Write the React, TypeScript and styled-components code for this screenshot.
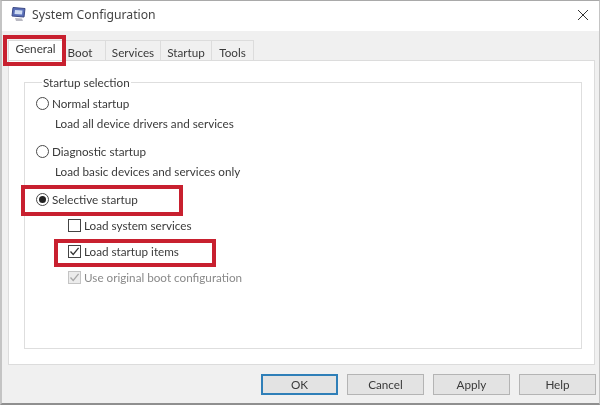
import styled, { createGlobalStyle } from 'styled-components';

const GlobalStyle = createGlobalStyle`
  html, body {
    margin: 0;
    padding: 0;
    background: #fff;
  }
`;

const Dialog = styled.div`
  position: relative;
  width: 600px;
  height: 405px;
  box-sizing: border-box;
  display: flex;
  flex-direction: column;
  overflow: hidden;
  border-top: 1px solid #a9a9a9;
  border-left: 2px solid #c4c4c4;
  border-right: 1px solid #c4c4c4;
  border-bottom: 2px solid #8f8f8f;
  background: #f0f0f0;
  font-family: Lato, "Noto Sans", sans-serif;
  font-size: 11.7px;
  color: #3a3a3a;
  filter: blur(0.3px);
`;

const TitleBar = styled.div`
  height: 30px;
  flex: none;
  display: flex;
  align-items: center;
  padding: 0 10px 3px 8px;
  box-sizing: border-box;
  gap: 5px;
  background: #fff;
`;

const Title = styled.div`
  flex: 1;
  font-family: "Noto Sans", sans-serif;
  font-size: 12.2px;
  color: #444;
`;

const Body = styled.div`
  flex: 1;
  display: flex;
  flex-direction: column;
  padding: 4px 4px 0 6px;
  min-height: 0;
`;

const Tabs = styled.div`
  display: flex;
  height: 20px;
  margin-top: 5px;
  flex: none;
`;

const Tab = styled.div<{ $active?: boolean; $w: number; $inset?: number }>`
  width: ${p => p.$w}px;
  box-sizing: border-box;
  display: flex;
  align-items: center;
  justify-content: center;
  background: ${p => (p.$active ? '#fff' : '#f0f0f0')};
  border: 1px solid #dcdcdc;
  border-bottom: none;
  border-left: ${p => (p.$active ? '1px solid #dcdcdc' : 'none')};
  padding: ${p => (p.$active ? '0 0 5px' : `2px ${p.$inset ?? 0}px 0 0`)};
`;

const Panel = styled.div`
  height: 305px;
  flex: none;
  box-sizing: border-box;
  background: #fff;
  border: 1px solid #dcdcdc;
  padding: 14px 12px 15px 15px;
  display: flex;
`;

const Group = styled.fieldset`
  flex: 1;
  margin: 0;
  min-width: 0;
  border: 1px solid #dedede;
  padding: 2px 0 0 11px;
  display: flex;
  flex-direction: column;
`;

const Legend = styled.legend`
  padding: 0 1px;
  margin-left: 6px;
  line-height: 14px;
`;

const Option = styled.div`
  height: 24px;
  display: flex;
  align-items: center;
  gap: 3px;
`;

const Hint = styled.div`
  height: 16px;
  line-height: 16px;
  margin: 0 0 8px 19px;
`;

const Radio = styled.span<{ $on?: boolean }>`
  width: 13px;
  height: 13px;
  box-sizing: border-box;
  border: 1px solid #4a4a4a;
  border-radius: 50%;
  background: #fff;
  display: flex;
  align-items: center;
  justify-content: center;
  &::after {
    content: '';
    display: ${p => (p.$on ? 'block' : 'none')};
    width: 7px;
    height: 7px;
    border-radius: 50%;
    background: #222;
  }
`;

const Sub = styled.div`
  margin-left: 32px;
  margin-top: 1px;
  display: flex;
  flex-direction: column;
`;

const CheckRow = styled.div<{ $muted?: boolean }>`
  height: 26px;
  display: flex;
  align-items: center;
  gap: 3px;
  color: ${p => (p.$muted ? '#8a8a8a' : 'inherit')};
`;

const Box = styled.span<{ $muted?: boolean }>`
  width: 13px;
  height: 13px;
  flex: none;
  box-sizing: border-box;
  border: 1px solid ${p => (p.$muted ? '#c4c4c4' : '#444')};
  background: ${p => (p.$muted ? '#ececec' : '#fff')};
  display: flex;
  svg {
    display: block;
  }
`;

const Footer = styled.div`
  flex: 1;
  display: flex;
  justify-content: flex-end;
  align-items: flex-start;
  gap: 9px;
  padding-top: 9px;
  margin-right: -1px;
`;

const Button = styled.div<{ $primary?: boolean }>`
  width: 77px;
  height: 21px;
  box-sizing: border-box;
  display: flex;
  align-items: center;
  justify-content: center;
  padding-bottom: 2px;
  background: #e3e3e3;
  border: ${p => (p.$primary ? '2px solid #2f7fb8' : '1px solid #b4b4b4')};
`;

const Highlight = styled.div<{ $x: number; $y: number; $w: number; $h: number }>`
  position: absolute;
  left: ${p => p.$x}px;
  top: ${p => p.$y}px;
  width: ${p => p.$w}px;
  height: ${p => p.$h}px;
  box-sizing: border-box;
  border: 4px solid #c8202f;
`;

const Check = ({ color }: { color: string }) => (
  <svg width="11" height="11" viewBox="0 0 11 11" fill="none">
    <path d="M1.5 5.5L4.2 8.5L9.6 1.8" stroke={color} strokeWidth="1.3" />
  </svg>
);

const AppIcon = () => (
  <svg width="17" height="17" viewBox="0 0 17 17">
    <path d="M3 1.5L15 2.5L14 11L2 10Z" fill="#5a6fb8" stroke="#3d4a86" strokeWidth="1" />
    <path d="M5 4L12.5 4.5L12 8.5L4.5 8Z" fill="#cfdcf2" />
    <path d="M5 12L12 12.5L13 15H6Z" fill="#b9b9c2" />
  </svg>
);

const CloseIcon = () => (
  <svg width="12" height="12" viewBox="0 0 12 12">
    <path d="M1 1L11 11M11 1L1 11" stroke="#333" strokeWidth="1" />
  </svg>
);

const tabs = [
  { label: 'General', w: 55, active: true },
  { label: 'Boot', w: 43, inset: 8 },
  { label: 'Services', w: 55 },
  { label: 'Startup', w: 51 },
  { label: 'Tools', w: 42 },
];

export default function App() {
  return (
    <>
      <GlobalStyle />
      <Dialog>
        <TitleBar>
          <AppIcon />
          <Title>System Configuration</Title>
          <CloseIcon />
        </TitleBar>
        <Body>
          <Tabs>
            {tabs.map(t => (
              <Tab key={t.label} $w={t.w} $active={t.active} $inset={t.inset}>{t.label}</Tab>
            ))}
          </Tabs>
          <Panel>
            <Group>
              <Legend>Startup selection</Legend>
              <Option><Radio />Normal startup</Option>
              <Hint>Load all device drivers and services</Hint>
              <Option><Radio />Diagnostic startup</Option>
              <Hint>Load basic devices and services only</Hint>
              <Option><Radio $on />Selective startup</Option>
              <Sub>
                <CheckRow><Box />Load system services</CheckRow>
                <CheckRow><Box><Check color="#333" /></Box>Load startup items</CheckRow>
                <CheckRow $muted><Box $muted><Check color="#a8a8a8" /></Box>Use original boot configuration</CheckRow>
              </Sub>
            </Group>
          </Panel>
          <Footer>
            <Button $primary>OK</Button>
            <Button>Cancel</Button>
            <Button>Apply</Button>
            <Button>Help</Button>
          </Footer>
        </Body>
        <Highlight $x={1} $y={34} $w={63} $h={31} />
        <Highlight $x={19} $y={184} $w={162} $h={31} />
        <Highlight $x={52} $y={238} $w={162} $h={28} />
      </Dialog>
    </>
  );
}
